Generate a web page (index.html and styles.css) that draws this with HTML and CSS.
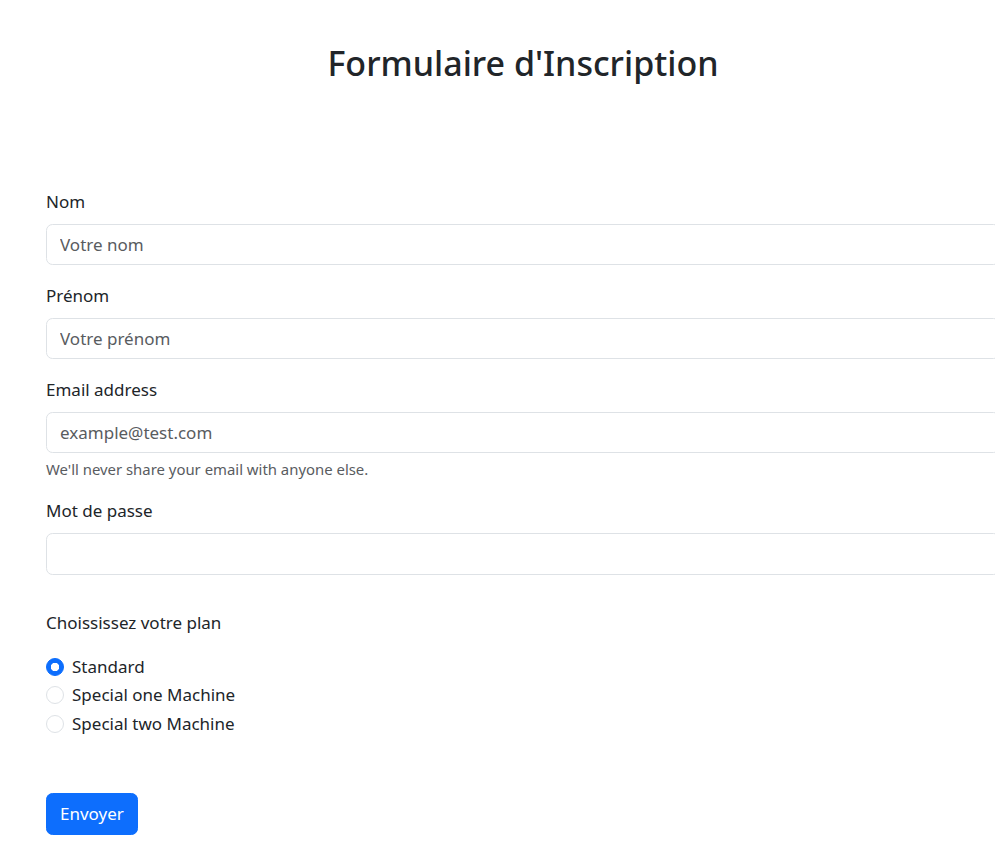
FILE: index.html
```html
<!DOCTYPE html>
<html lang="fr">
<head>
<meta charset="utf-8">
<title>Formulaire d'Inscription</title>
<link rel="stylesheet" href="styles.css">
</head>
<body>
<div class="page">
  <h1 class="title">Formulaire d'Inscription</h1>
  <form class="form">
    <div class="field">
      <label class="label" for="nom">Nom</label>
      <input class="control" id="nom" type="text" placeholder="Votre nom">
    </div>
    <div class="field">
      <label class="label" for="prenom">Prénom</label>
      <input class="control" id="prenom" type="text" placeholder="Votre prénom">
    </div>
    <div class="field">
      <label class="label" for="email">Email address</label>
      <input class="control" id="email" type="email" placeholder="example@test.com">
      <div class="help">We'll never share your email with anyone else.</div>
    </div>
    <div class="field">
      <label class="label" for="pwd">Mot de passe</label>
      <input class="control" id="pwd" type="password">
    </div>
    <div class="plan">
      <div class="plan-title">Choississez votre plan</div>
      <label class="check"><input class="radio" type="radio" name="plan" checked><span>Standard</span></label>
      <label class="check"><input class="radio" type="radio" name="plan"><span>Special one Machine</span></label>
      <label class="check"><input class="radio" type="radio" name="plan"><span>Special two Machine</span></label>
    </div>
    <button class="btn" type="button">Envoyer</button>
  </form>
</div>
</body>
</html>
```
FILE: styles.css
```css
html, body {
  margin: 0;
  overflow: hidden;
  background: #fff;
}
body {
  font-family: "Noto Sans", "Open Sans", sans-serif;
  font-size: 17px;
  line-height: 26.25px;
  color: #212529;
}
.page {
  width: 954px;
  padding: 0 0 0 46px;
}
.title {
  margin: 42.6px 0 0;
  font-size: 34px;
  font-weight: 500;
  line-height: 40.8px;
  text-align: center;
}
.form {
  margin-top: 105.6px;
  display: flex;
  flex-direction: column;
  align-items: flex-start;
}
.field {
  align-self: stretch;
  margin-bottom: 17.6px;
}
.label {
  display: block;
  margin-bottom: 8.75px;
}
.control {
  display: block;
  box-sizing: border-box;
  width: 100%;
  height: 41.4px;
  padding: 6.5px 13px;
  font: inherit;
  color: #212529;
  background: #fff;
  border: 1px solid #dee2e6;
  border-radius: 6.5px;
  outline: none;
}
.control::placeholder {
  color: #595c5f;
  opacity: 1;
}
.help {
  margin-top: 4.4px;
  font-size: 14.9px;
  line-height: 23px;
  color: #595c5f;
}
.plan {
  margin-top: 17.4px;
  display: flex;
  flex-direction: column;
}
.plan-title {
  margin-bottom: 17.6px;
}
.check {
  display: flex;
  align-items: flex-start;
  min-height: 26.3px;
  margin-bottom: 2.2px;
}
.radio {
  appearance: none;
  -webkit-appearance: none;
  width: 18px;
  height: 18px;
  margin: 4.4px 8px 0 0;
  border: 1px solid #dee2e6;
  border-radius: 50%;
  background: #fff;
  flex: none;
}
.radio:checked {
  background: #0d6efd radial-gradient(circle, #fff 0 4px, transparent 4.5px);
  border-color: #0d6efd;
}
.btn {
  margin-top: 54.4px;
  padding: 6.5px 13px;
  font: inherit;
  color: #fff;
  background: #0d6efd;
  border: 1px solid #0d6efd;
  border-radius: 6.5px;
  line-height: 26.25px;
}
```
